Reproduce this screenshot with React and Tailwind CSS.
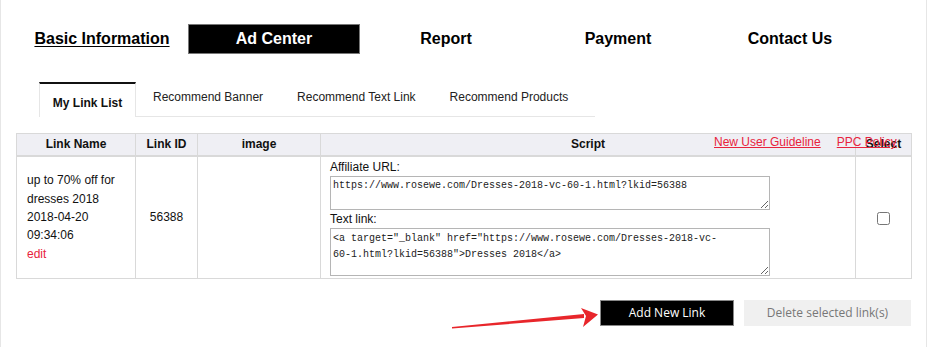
import React from "react";

const navItems = ["Basic Information", "Ad Center", "Report", "Payment", "Contact Us"];
const tabs = ["My Link List", "Recommend Banner", "Recommend Text Link", "Recommend Products"];

function TopNav() {
    return (
        <div className="flex pl-[15px] pt-6">
            {navItems.map((item) => {
                if (item === "Ad Center") {
                    return (
                        <div key={item} className="w-[172px] h-[30px] flex items-center justify-center bg-black border border-[#777] text-white font-bold text-[16px]">
                            {item}
                        </div>
                    );
                }
                return (
                    <div key={item} className="w-[172px] h-[30px] flex items-center justify-center text-black font-bold text-[16px]">
                        <span className={item === "Basic Information" ? "underline underline-offset-2" : ""}>{item}</span>
                    </div>
                );
            })}
        </div>
    );
}

function Tabs() {
    return (
        <div className="flex mt-[28px] ml-[38px] text-[12px] text-[#222]">
            <div className="w-[97px] h-[35px] border-t-2 border-t-[#111] border-x border-x-[#e6e6e6] flex items-center justify-center font-bold text-[#111] pt-1">
                {tabs[0]}
            </div>
            <div className="flex border-b border-[#e6e6e6] h-[35px] pr-[10px]">
                {tabs.slice(1).map((tab) => (
                    <div key={tab} className="px-[17px] flex items-center pb-1">
                        {tab}
                    </div>
                ))}
            </div>
        </div>
    );
}

function LinkTable() {
    return (
        <div className="relative mx-[15px] mt-4">
            <table className="w-[895px] border-collapse text-[12px] text-[#111] table-fixed">
                <thead className="bg-[#efeff4]">
                    <tr className="h-[22px]">
                        <th className="w-[119px] border border-[#d9d9d9] border-b-2 font-bold">Link Name</th>
                        <th className="w-[62px] border border-[#d9d9d9] border-b-2 font-bold">Link ID</th>
                        <th className="w-[123px] border border-[#d9d9d9] border-b-2 font-bold">image</th>
                        <th className="w-[535px] border border-[#d9d9d9] border-b-2 font-bold">Script</th>
                        <th className="w-[56px] border border-[#d9d9d9] border-b-2 font-bold">Select</th>
                    </tr>
                </thead>
                <tbody>
                    <tr className="h-[123px]">
                        <td className="border border-[#d9d9d9] px-[10px] align-middle leading-[18.4px]">
                            up to 70% off for dresses 2018
                            <br />
                            2018-04-20 09:34:06
                            <br />
                            <span className="text-[#e8233c]">edit</span>
                        </td>
                        <td className="border border-[#d9d9d9] text-center">56388</td>
                        <td className="border border-[#d9d9d9]"></td>
                        <td className="border border-[#d9d9d9] pl-[9px] pt-[1px] pb-[2px] align-top">
                            <div className="leading-[18px]">Affiliate URL:</div>
                            <textarea
                                className="block w-[440px] h-[34px] border border-[#b5b5b5] px-[2px] py-[2px] text-[10px] leading-[14px] text-[#222] outline-none"
                                style={{ fontFamily: '"Liberation Mono", monospace' }}
                                defaultValue="https://www.rosewe.com/Dresses-2018-vc-60-1.html?lkid=56388"
                            />
                            <div className="leading-[18px]">Text link:</div>
                            <textarea
                                className="block w-[440px] h-[48px] border border-[#b5b5b5] px-[2px] py-[2px] text-[10px] leading-[16px] text-[#222] outline-none"
                                style={{ fontFamily: '"Liberation Mono", monospace' }}
                                defaultValue={'<a target="_blank" href="https://www.rosewe.com/Dresses-2018-vc-\n60-1.html?lkid=56388">Dresses 2018</a>'}
                            />
                        </td>
                        <td className="border border-[#d9d9d9] text-center">
                            <input type="checkbox" className="w-[13px] h-[13px] align-middle" />
                        </td>
                    </tr>
                </tbody>
            </table>
            <div className="absolute top-[1px] left-[698px] flex gap-4 text-[12px] leading-[16px] text-[#e8233c]">
                <span className="underline">New User Guideline</span>
                <span className="underline">PPC Policy</span>
            </div>
        </div>
    );
}

function ButtonRow() {
    return (
        <div className="relative flex justify-end gap-[10px] pr-[15px] mt-[21px]" style={{ fontFamily: '"Open Sans", "Liberation Sans", sans-serif' }}>
            <svg className="absolute -left-px top-0" width="927" height="40" viewBox="0 0 927 40">
                <polygon points="452,27 584,14 584,18 452,28.5" fill="#e8262b" />
                <polygon points="581,8 598,14.5 583,27 586,16" fill="#e8262b" />
            </svg>
            <button className="w-[134px] h-[26px] bg-black border border-[#888] text-white text-[12px]">Add New Link</button>
            <button className="w-[167px] h-[26px] bg-[#f0f0f0] text-[#777] text-[12px]">Delete selected link(s)</button>
        </div>
    );
}

export default function App() {
    return (
        <div className="w-[927px] min-h-[347px] bg-white border-x border-[#e6e6e6]" style={{ fontFamily: '"Liberation Sans", Arial, sans-serif' }}>
            <TopNav />
            <Tabs />
            <LinkTable />
            <ButtonRow />
        </div>
    );
}
